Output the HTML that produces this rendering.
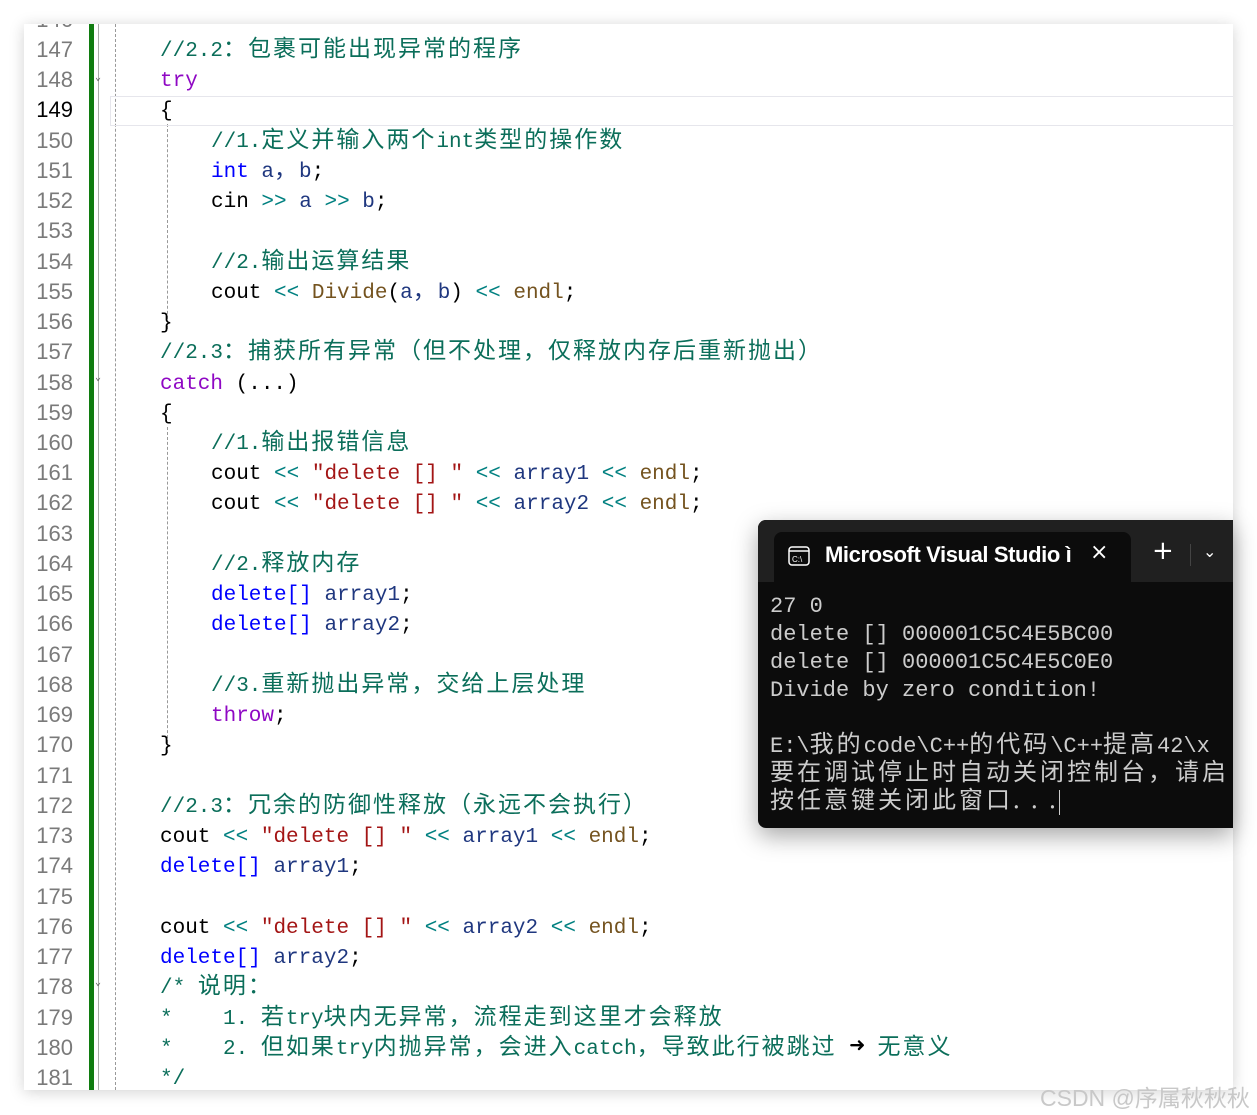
<!DOCTYPE html>
<html><head><meta charset="utf-8"><style>
body{margin:0;width:1257px;height:1115px;background:#fff;position:relative;overflow:hidden;font-family:"Liberation Mono","Noto Sans CJK SC",monospace}
#card{position:absolute;left:24px;top:24px;width:1209px;height:1066px;background:#fff;box-shadow:0 2px 14px rgba(0,0,0,.18);overflow:hidden}
.ln{position:absolute;left:0;width:49px;text-align:right;font-family:"Liberation Sans",sans-serif;font-size:22px;color:#7a7a7a;height:30px;line-height:30px}
.l{position:absolute;font-size:21px;height:30px;line-height:34px;white-space:pre;color:#000}
.z{font-family:"Noto Sans CJK SC",sans-serif;letter-spacing:2px;font-size:23px;line-height:0}
.c{color:#0b6e5a}.k{color:#8f08c4}.b{color:#0000ff}.v{color:#1f377f}.f{color:#74531f}.s{color:#a31515}.o{color:#008080}
#con{position:absolute;left:758px;top:520px;width:475px;height:308px;background:#0c0c0c;border-radius:8px 0 0 8px;box-shadow:0 8px 24px rgba(0,0,0,.35);overflow:hidden}
#tb{position:absolute;left:0;top:0;width:100%;height:62px;background:#202020}
#tab{position:absolute;left:16px;top:12px;width:357px;height:50px;background:#0c0c0c;border-radius:8px 8px 0 0}
.cl{position:absolute;left:12px;font-size:22px;color:#cccccc;white-space:pre;height:28px;line-height:30px}
.cl .z{font-size:24px;letter-spacing:3px}
</style></head><body>
<div id="card">
<div style="position:absolute;left:65px;top:0;width:5px;height:1066px;background:#107c10"></div>
<div style="position:absolute;left:74px;top:0;height:1066px;border-left:1px solid #aaa"></div>
<div style="position:absolute;left:91px;top:0;height:1066px;border-left:1px dashed #999"></div>
<div style="position:absolute;left:143px;top:100px;height:205px;border-left:1px dashed #999"></div>
<div style="position:absolute;left:143px;top:403px;height:326px;border-left:1px dashed #999"></div>
<div style="position:absolute;left:86px;top:72px;width:1130px;height:28px;border:1px solid #e6e6ec"></div>
<div style="position:absolute;left:71px;top:48px;font-size:10px;color:#555">⌄</div>
<div style="position:absolute;left:71px;top:348px;font-size:10px;color:#555">⌄</div>
<div style="position:absolute;left:71px;top:953px;font-size:10px;color:#555">⌄</div>
</div>
<div id="lines" style="position:absolute;left:24px;top:24px;width:1209px;height:1066px;overflow:hidden">
<div class="ln" style="top:-19px">146</div>
<div class="ln" style="top:11px">147</div><div class="l c" style="left:136px;top:11px">//2.2<span class="z">：包裹可能出现异常的程序</span></div>
<div class="ln" style="top:41px">148</div><div class="l k" style="left:136px;top:41px">try</div>
<div class="ln" style="top:71px;color:#000">149</div><div class="l" style="left:136px;top:71px">{</div>
<div class="ln" style="top:102px">150</div><div class="l c" style="left:187px;top:102px">//1.<span class="z">定义并输入两个</span>int<span class="z">类型的操作数</span></div>
<div class="ln" style="top:132px">151</div><div class="l" style="left:187px;top:132px"><span class="b">int</span> <span class="v">a<span class="z">，</span>b</span>;</div>
<div class="ln" style="top:162px">152</div><div class="l" style="left:187px;top:162px">cin <span class="o">&gt;&gt;</span> <span class="v">a</span> <span class="o">&gt;&gt;</span> <span class="v">b</span>;</div>
<div class="ln" style="top:192px">153</div>
<div class="ln" style="top:223px">154</div><div class="l c" style="left:187px;top:223px">//2.<span class="z">输出运算结果</span></div>
<div class="ln" style="top:253px">155</div><div class="l" style="left:187px;top:253px">cout <span class="o">&lt;&lt;</span> <span class="f">Divide</span>(<span class="v">a<span class="z">，</span>b</span>) <span class="o">&lt;&lt;</span> <span class="f">endl</span>;</div>
<div class="ln" style="top:283px">156</div><div class="l" style="left:136px;top:283px">}</div>
<div class="ln" style="top:313px">157</div><div class="l c" style="left:136px;top:313px">//2.3<span class="z">：捕获所有异常（但不处理，仅释放内存后重新抛出）</span></div>
<div class="ln" style="top:344px">158</div><div class="l" style="left:136px;top:344px"><span class="k">catch</span> (...)</div>
<div class="ln" style="top:374px">159</div><div class="l" style="left:136px;top:374px">{</div>
<div class="ln" style="top:404px">160</div><div class="l c" style="left:187px;top:404px">//1.<span class="z">输出报错信息</span></div>
<div class="ln" style="top:434px">161</div><div class="l" style="left:187px;top:434px">cout <span class="o">&lt;&lt;</span> <span class="s">"delete [] "</span> <span class="o">&lt;&lt;</span> <span class="v">array1</span> <span class="o">&lt;&lt;</span> <span class="f">endl</span>;</div>
<div class="ln" style="top:464px">162</div><div class="l" style="left:187px;top:464px">cout <span class="o">&lt;&lt;</span> <span class="s">"delete [] "</span> <span class="o">&lt;&lt;</span> <span class="v">array2</span> <span class="o">&lt;&lt;</span> <span class="f">endl</span>;</div>
<div class="ln" style="top:495px">163</div>
<div class="ln" style="top:525px">164</div><div class="l c" style="left:187px;top:525px">//2.<span class="z">释放内存</span></div>
<div class="ln" style="top:555px">165</div><div class="l" style="left:187px;top:555px"><span class="b">delete[]</span> <span class="v">array1</span>;</div>
<div class="ln" style="top:585px">166</div><div class="l" style="left:187px;top:585px"><span class="b">delete[]</span> <span class="v">array2</span>;</div>
<div class="ln" style="top:616px">167</div>
<div class="ln" style="top:646px">168</div><div class="l c" style="left:187px;top:646px">//3.<span class="z">重新抛出异常，交给上层处理</span></div>
<div class="ln" style="top:676px">169</div><div class="l k" style="left:187px;top:676px">throw<span style="color:#000">;</span></div>
<div class="ln" style="top:706px">170</div><div class="l" style="left:136px;top:706px">}</div>
<div class="ln" style="top:737px">171</div>
<div class="ln" style="top:767px">172</div><div class="l c" style="left:136px;top:767px">//2.3<span class="z">：冗余的防御性释放（永远不会执行）</span></div>
<div class="ln" style="top:797px">173</div><div class="l" style="left:136px;top:797px">cout <span class="o">&lt;&lt;</span> <span class="s">"delete [] "</span> <span class="o">&lt;&lt;</span> <span class="v">array1</span> <span class="o">&lt;&lt;</span> <span class="f">endl</span>;</div>
<div class="ln" style="top:827px">174</div><div class="l" style="left:136px;top:827px"><span class="b">delete[]</span> <span class="v">array1</span>;</div>
<div class="ln" style="top:858px">175</div>
<div class="ln" style="top:888px">176</div><div class="l" style="left:136px;top:888px">cout <span class="o">&lt;&lt;</span> <span class="s">"delete [] "</span> <span class="o">&lt;&lt;</span> <span class="v">array2</span> <span class="o">&lt;&lt;</span> <span class="f">endl</span>;</div>
<div class="ln" style="top:918px">177</div><div class="l" style="left:136px;top:918px"><span class="b">delete[]</span> <span class="v">array2</span>;</div>
<div class="ln" style="top:948px">178</div><div class="l c" style="left:136px;top:948px">/* <span class="z">说明：</span></div>
<div class="ln" style="top:979px">179</div><div class="l c" style="left:136px;top:979px">*    1. <span class="z">若</span>try<span class="z">块内无异常，流程走到这里才会释放</span></div>
<div class="ln" style="top:1009px">180</div><div class="l c" style="left:136px;top:1009px">*    2. <span class="z">但如果</span>try<span class="z">内抛异常，会进入</span>catch<span class="z">，导致此行被跳过</span> <span style="color:#000;font-size:26px;line-height:0">➜</span> <span class="z">无意义</span></div>
<div class="ln" style="top:1039px">181</div><div class="l c" style="left:136px;top:1039px">*/</div>
</div>
<div id="con">
<div id="tb"></div>
<div id="tab">
<svg style="position:absolute;left:14px;top:14px" width="22" height="20" viewBox="0 0 22 20"><rect x="1" y="1" width="20" height="18" rx="3" fill="none" stroke="#fff" stroke-width="1.5"/><line x1="1" y1="5" x2="21" y2="5" stroke="#fff" stroke-width="1.5"/><text x="4" y="16" font-size="8" fill="#fff" font-family="Liberation Sans">C:\</text></svg>
<div style="position:absolute;left:51px;top:10px;width:248px;overflow:hidden;font-family:'Liberation Sans',sans-serif;font-size:22px;font-weight:bold;letter-spacing:-0.4px;color:#fff;white-space:nowrap">Microsoft Visual Studio ì</div>
<div style="position:absolute;left:316px;top:8px;font-family:'DejaVu Sans';font-size:22px;color:#fff">×</div>
</div>
<div style="position:absolute;left:394px;top:16px;font-family:'DejaVu Sans';font-size:26px;color:#fff">+</div>
<div style="position:absolute;left:432px;top:24px;height:22px;border-left:1px solid #444"></div>
<div style="position:absolute;left:445px;top:22px;font-family:'DejaVu Sans';font-size:16px;color:#fff">⌄</div>
<div class="cl" style="top:72px">27 0</div>
<div class="cl" style="top:100px">delete [] 000001C5C4E5BC00</div>
<div class="cl" style="top:128px">delete [] 000001C5C4E5C0E0</div>
<div class="cl" style="top:156px">Divide by zero condition!</div>
<div class="cl" style="top:212px">E:\<span class="z">我的</span>code\C++<span class="z">的代码</span>\C++<span class="z">提高</span>42\x</div>
<div class="cl" style="top:240px"><span class="z">要在调试停止时自动关闭控制台，请启</span></div>
<div class="cl" style="top:268px"><span class="z">按任意键关闭此窗口. . .</span><span style="border-left:1px solid #ccc"></span></div>
</div>
<div style="position:absolute;left:1040px;top:1079px;font-family:'Liberation Sans','Noto Sans CJK SC',sans-serif;font-size:23px;color:#c8c8c8;white-space:nowrap">CSDN @序属秋秋秋</div>
</body></html>
